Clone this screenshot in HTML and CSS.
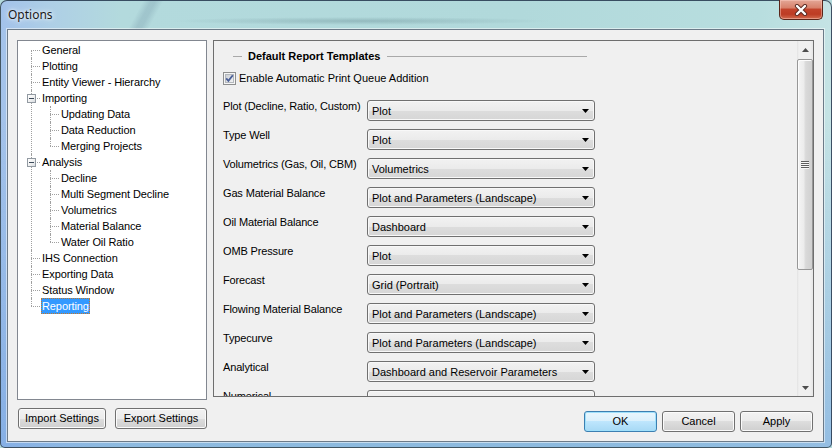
FILE: index.html
```html
<!DOCTYPE html>
<html>
<head>
<meta charset="utf-8">
<link rel="stylesheet" href="styles.css">
</head>
<body>
<div class="window">
  <div class="titlebar">
    <div class="title">Options</div>
    <div class="close">
      <svg width="14" height="12" viewBox="0 0 14 12"><path d="M3 2 L11 10 M11 2 L3 10" stroke="#5a2a22" stroke-width="4.2" stroke-linecap="round"/><path d="M3 2 L11 10 M11 2 L3 10" stroke="#ffffff" stroke-width="2.4" stroke-linecap="round"/></svg>
    </div>
  </div>
  <div class="client">
    <div class="left-col">
      <div class="tree">
        <ul class="root">
          <li class="first"><span>General</span></li>
          <li><span>Plotting</span></li>
          <li><span>Entity Viewer - Hierarchy</span></li>
          <li><i class="exp"></i><span>Importing</span>
            <ul>
              <li><span>Updating Data</span></li>
              <li><span>Data Reduction</span></li>
              <li class="last"><span>Merging Projects</span></li>
            </ul>
          </li>
          <li><i class="exp"></i><span>Analysis</span>
            <ul>
              <li><span>Decline</span></li>
              <li><span>Multi Segment Decline</span></li>
              <li><span>Volumetrics</span></li>
              <li><span>Material Balance</span></li>
              <li class="last"><span>Water Oil Ratio</span></li>
            </ul>
          </li>
          <li><span>IHS Connection</span></li>
          <li><span>Exporting Data</span></li>
          <li><span>Status Window</span></li>
          <li class="last"><span class="sel">Reporting</span></li>
        </ul>
      </div>
      <div class="left-buttons">
        <div class="btn w-import">Import Settings</div>
        <div class="btn w-export">Export Settings</div>
      </div>
    </div>
    <div class="right-col">
      <div class="panel">
        <div class="panel-body">
          <div class="group-head">
            <span class="gl-left"></span>
            <span class="gh-text">Default Report Templates</span>
            <span class="gl-right"></span>
          </div>
          <div class="check-row">
            <svg class="checkbox" width="13" height="13" viewBox="0 0 13 13">
              <defs><linearGradient id="cg" x1="0" y1="0" x2="1" y2="1"><stop offset="0" stop-color="#c9cdd3"/><stop offset="1" stop-color="#f4f5f6"/></linearGradient></defs>
              <rect x="0.5" y="0.5" width="12" height="12" fill="#f6f6f6" stroke="#8e8f8f"/>
              <rect x="2.5" y="2.5" width="8" height="8" fill="url(#cg)" stroke="#b4b8bd"/>
              <path d="M3.2 6.4 L5.4 8.9 L9.8 3.2" fill="none" stroke="#4a5f97" stroke-width="1.8"/>
            </svg>
            <span>Enable Automatic Print Queue Addition</span>
          </div>
          <div class="rows">
            <div class="row first"><div class="lbl">Plot (Decline, Ratio, Custom)</div><div class="combo"><span>Plot</span><svg width="7" height="4"><polygon points="0,0 7,0 3.5,4" fill="#000"/></svg></div></div>
            <div class="row"><div class="lbl">Type Well</div><div class="combo"><span>Plot</span><svg width="7" height="4"><polygon points="0,0 7,0 3.5,4" fill="#000"/></svg></div></div>
            <div class="row"><div class="lbl">Volumetrics (Gas, Oil, CBM)</div><div class="combo"><span>Volumetrics</span><svg width="7" height="4"><polygon points="0,0 7,0 3.5,4" fill="#000"/></svg></div></div>
            <div class="row"><div class="lbl">Gas Material Balance</div><div class="combo"><span>Plot and Parameters (Landscape)</span><svg width="7" height="4"><polygon points="0,0 7,0 3.5,4" fill="#000"/></svg></div></div>
            <div class="row"><div class="lbl">Oil Material Balance</div><div class="combo"><span>Dashboard</span><svg width="7" height="4"><polygon points="0,0 7,0 3.5,4" fill="#000"/></svg></div></div>
            <div class="row"><div class="lbl">OMB Pressure</div><div class="combo"><span>Plot</span><svg width="7" height="4"><polygon points="0,0 7,0 3.5,4" fill="#000"/></svg></div></div>
            <div class="row"><div class="lbl">Forecast</div><div class="combo"><span>Grid (Portrait)</span><svg width="7" height="4"><polygon points="0,0 7,0 3.5,4" fill="#000"/></svg></div></div>
            <div class="row"><div class="lbl">Flowing Material Balance</div><div class="combo"><span>Plot and Parameters (Landscape)</span><svg width="7" height="4"><polygon points="0,0 7,0 3.5,4" fill="#000"/></svg></div></div>
            <div class="row"><div class="lbl">Typecurve</div><div class="combo"><span>Plot and Parameters (Landscape)</span><svg width="7" height="4"><polygon points="0,0 7,0 3.5,4" fill="#000"/></svg></div></div>
            <div class="row"><div class="lbl">Analytical</div><div class="combo"><span>Dashboard and Reservoir Parameters</span><svg width="7" height="4"><polygon points="0,0 7,0 3.5,4" fill="#000"/></svg></div></div>
            <div class="row"><div class="lbl">Numerical</div><div class="combo"><span>Dashboard</span><svg width="7" height="4"><polygon points="0,0 7,0 3.5,4" fill="#000"/></svg></div></div>
          </div>
        </div>
        <div class="vscroll">
          <div class="sb-btn"><svg width="7" height="4"><polygon points="0,4 7,4 3.5,0" fill="#4d4d4d"/></svg></div>
          <div class="sb-thumb"><div class="grip"></div></div>
          <div class="sb-track"></div>
          <div class="sb-btn"><svg width="7" height="4"><polygon points="0,0 7,0 3.5,4" fill="#4d4d4d"/></svg></div>
        </div>
      </div>
      <div class="right-buttons">
        <div class="btn btn-default w-dlg">OK</div>
        <div class="btn w-dlg">Cancel</div>
        <div class="btn w-dlg">Apply</div>
      </div>
    </div>
  </div>
</div>
</body>
</html>
```
FILE: styles.css
```css
html, body {
  margin: 0;
  padding: 0;
  width: 832px;
  height: 448px;
  overflow: hidden;
  background: #b3d9dc;
}

.window {
  box-sizing: border-box;
  width: 832px;
  height: 448px;
  display: flex;
  flex-direction: column;
  border: 1px solid rgba(35, 50, 65, 0.8);
  border-radius: 7px 7px 5px 5px;
  background:
    radial-gradient(ellipse 190px 4px at 360px 20px, rgba(60, 95, 105, 0.26), rgba(60, 95, 105, 0) 100%),
    linear-gradient(118deg, rgba(60, 90, 120, 0) 38%, rgba(60, 90, 120, 0.16) 48%, rgba(60, 90, 120, 0.16) 54%, rgba(60, 90, 120, 0) 64%) 112px 0 / 64px 28px no-repeat,
    linear-gradient(180deg, rgba(255, 255, 255, 0) 0, rgba(255, 255, 255, 0) 120px, rgba(110, 160, 225, 0.55) 440px),
    linear-gradient(90deg, #a3c2ea 0px, #aecfe6 50px, #b3dadd 120px, #b1d9db 520px, #b8dedf 760px, #c5e3e5 832px);
  font-family: "Liberation Sans", Arial, sans-serif;
  font-size: 11px;
  color: #000;
}

/* ---------- title bar ---------- */
.titlebar {
  height: 28px;
  display: flex;
  justify-content: space-between;
  align-items: flex-start;
  flex: none;
}

.title {
  margin: 6px 0 0 7px;
  font-family: "Noto Sans", "Open Sans", sans-serif;
  font-size: 12px;
  line-height: 16px;
  color: #1a1a1a;
  text-shadow: 0 0 6px rgba(255, 255, 255, 0.95), 0 0 3px rgba(255, 255, 255, 0.9);
}

.close {
  margin: -1px 8px 0 0;
  width: 44px;
  height: 20px;
  box-sizing: border-box;
  border: 1px solid #5a2519;
  border-top: none;
  border-radius: 0 0 5px 5px;
  background: linear-gradient(180deg, #e3a797 0%, #d8826c 40%, #c2432b 50%, #bd3c24 75%, #d16b4f 100%);
  box-shadow: inset 0 0 0 1px rgba(255, 210, 200, 0.45);
  display: flex;
  align-items: center;
  justify-content: center;
}

/* ---------- client ---------- */
.client {
  flex: 1;
  margin: 0 7px 5px 6px;
  box-sizing: border-box;
  background: #f0f0f0;
  border: 1px solid #6c7a88;
  box-shadow: 0 0 0 1px rgba(255, 255, 255, 0.5);
  display: flex;
  gap: 6px;
  padding: 10px 9px 0 9px;
}

.left-col {
  width: 190px;
  display: flex;
  flex-direction: column;
}

.right-col {
  width: 601px;
  display: flex;
  flex-direction: column;
}

/* ---------- tree ---------- */
.tree {
  box-sizing: border-box;
  width: 190px;
  height: 360px;
  border: 1px solid #828790;
  background: #fff;
  padding: 1px 0 0 13px;
}

.tree ul {
  list-style: none;
  margin: 0;
  padding: 0;
}

.tree li ul {
  padding-left: 9px;
}

.tree li {
  position: relative;
  padding-left: 10px;
}

.tree li::before {
  content: "";
  position: absolute;
  left: 0;
  top: 8px;
  width: 9px;
  border-top: 1px dotted #a0a0a0;
}

.tree li::after {
  content: "";
  position: absolute;
  left: 0;
  top: 0;
  bottom: 0;
  border-left: 1px dotted #a0a0a0;
}

.tree li.first::after {
  top: 8px;
}

.tree li.last::after {
  bottom: auto;
  height: 8px;
}

.tree li > span {
  display: inline-block;
  box-sizing: border-box;
  height: 16px;
  line-height: 16px;
  padding: 0 1px;
  white-space: nowrap;
  letter-spacing: -0.1px;
}

.tree li > span.sel {
  background: #3399ff;
  color: #fff;
  outline: 1px dotted #c4782a;
  outline-offset: -1px;
}

.tree .exp {
  position: absolute;
  z-index: 2;
  left: -4px;
  top: 4px;
  width: 9px;
  height: 9px;
  box-sizing: border-box;
  border: 1px solid #929aa2;
  background: linear-gradient(135deg, #ffffff 0%, #f2f2f2 50%, #d8dce0 100%);
}

.tree .exp::after {
  content: "";
  position: absolute;
  left: 1px;
  top: 3px;
  width: 5px;
  height: 1px;
  background: #3c4a5a;
}

/* ---------- buttons ---------- */
.left-buttons {
  display: flex;
  gap: 9px;
  margin-top: 8px;
  padding-left: 1px;
}

.right-buttons {
  display: flex;
  justify-content: flex-end;
  gap: 5px;
  margin-top: 14px;
  padding-right: 1px;
}

.btn {
  box-sizing: border-box;
  height: 21px;
  line-height: 19px;
  text-align: center;
  border: 1px solid #707070;
  border-radius: 3px;
  background: linear-gradient(180deg, #f2f2f2 0%, #ebebeb 50%, #dddddd 50%, #cfcfcf 100%);
  box-shadow: inset 0 0 0 1px #fbfbfb;
  white-space: nowrap;
}

.btn-default {
  border-color: #3c7fb1;
  background: linear-gradient(180deg, #eaf6fd 0%, #d9f0fc 50%, #bee6fd 50%, #a7d9f5 100%);
  box-shadow: inset 0 0 0 1px #9fe0fb;
}

.w-import { width: 88px; }
.w-export { width: 92px; }
.w-dlg { width: 73px; }

/* ---------- settings panel ---------- */
.panel {
  box-sizing: border-box;
  height: 357px;
  border: 1px solid #6e6e6e;
  display: flex;
  overflow: hidden;
}

.panel-body {
  flex: 1;
  padding: 8px 0 0 9px;
  overflow: hidden;
}

.group-head {
  display: flex;
  align-items: center;
  height: 14px;
}

.gl-left {
  margin-left: 10px;
  width: 9px;
  border-top: 1px solid #a9a9a9;
}

.gh-text {
  margin-left: 6px;
  font-weight: bold;
  white-space: nowrap;
}

.gl-right {
  margin-left: 7px;
  width: 200px;
  border-top: 1px solid #a9a9a9;
}

.check-row {
  display: flex;
  align-items: center;
  height: 14px;
  margin-top: 8px;
}

.checkbox {
  flex: none;
  margin-right: 3px;
}

.rows {
  margin-top: 15px;
}

.row {
  display: flex;
  height: 21px;
}

.row + .row {
  margin-top: 8px;
}

.row.first {
  margin-bottom: 1px;
}

.lbl {
  width: 144px;
  flex: none;
  line-height: 13px;
  white-space: nowrap;
  letter-spacing: -0.15px;
}

.combo {
  box-sizing: border-box;
  width: 228px;
  height: 21px;
  border: 1px solid #707070;
  border-radius: 3px;
  background: linear-gradient(180deg, #f2f2f2 0%, #ebebeb 50%, #dddddd 50%, #d6d6d6 100%);
  box-shadow: inset 0 0 0 1px #f8f8f8;
  display: flex;
  align-items: center;
  justify-content: space-between;
  padding: 0 5px 0 4px;
  white-space: nowrap;
}

/* ---------- scrollbar ---------- */
.vscroll {
  width: 16px;
  flex: none;
  display: flex;
  flex-direction: column;
  background: linear-gradient(90deg, #e2e2e2 0, #f0f0f0 2px, #f0f0f0 13px, #e6e6e6 16px);
}

.sb-btn {
  height: 17px;
  display: flex;
  align-items: center;
  justify-content: center;
  flex: none;
}

.sb-thumb {
  margin-top: 1px;
  height: 211px;
  box-sizing: border-box;
  border: 1px solid #979797;
  border-radius: 2px;
  background: linear-gradient(90deg, #f4f4f4 0%, #ececec 40%, #d9d9d9 55%, #d0d0d0 100%);
  box-shadow: inset 1px 1px 0 #fcfcfc;
  display: flex;
  align-items: center;
  justify-content: center;
  flex: none;
}

.grip {
  width: 8px;
  height: 8px;
  margin-left: -1px;
  background: repeating-linear-gradient(180deg, #5e5e5e 0, #5e5e5e 1px, #f8f8f8 1px, #f8f8f8 2px);
}

.sb-track {
  flex: 1;
}
```
